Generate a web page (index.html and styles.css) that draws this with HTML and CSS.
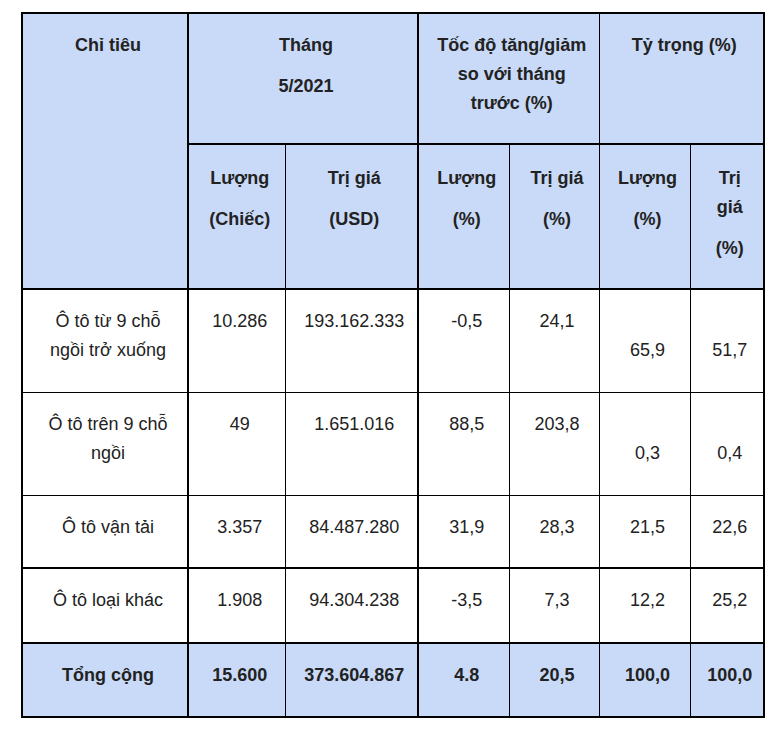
FILE: index.html
```html
<!DOCTYPE html>
<html lang="vi">
<head>
<meta charset="utf-8">
<title>Bảng</title>
<link rel="stylesheet" href="styles.css">
</head>
<body>
<div class="page">
<table class="data">
  <colgroup>
    <col class="c1"><col class="c2"><col class="c3"><col class="c4"><col class="c5"><col class="c6"><col class="c7">
  </colgroup>
  <thead>
    <tr class="h1">
      <th rowspan="2" class="first">Chỉ tiêu</th>
      <th colspan="2"><p>Tháng</p><p>5/2021</p></th>
      <th colspan="2" class="lb">Tốc độ tăng/giảm so với tháng trước (%)</th>
      <th colspan="2">Tỷ trọng (%)</th>
    </tr>
    <tr class="h2">
      <th><p>Lượng</p><p>(Chiếc)</p></th>
      <th><p>Trị giá</p><p>(USD)</p></th>
      <th class="lb"><p>Lượng</p><p>(%)</p></th>
      <th><p>Trị giá</p><p>(%)</p></th>
      <th><p>Lượng</p><p>(%)</p></th>
      <th><p>Trị giá</p><p>(%)</p></th>
    </tr>
  </thead>
  <tbody>
    <tr class="two">
      <td class="first">Ô tô từ 9 chỗ ngồi trở xuống</td>
      <td>10.286</td>
      <td>193.162.333</td>
      <td class="lb">-0,5</td>
      <td>24,1</td>
      <td class="low">65,9</td>
      <td class="low">51,7</td>
    </tr>
    <tr class="two r2">
      <td class="first">Ô tô trên 9 chỗ ngồi</td>
      <td>49</td>
      <td>1.651.016</td>
      <td class="lb">88,5</td>
      <td>203,8</td>
      <td class="low">0,3</td>
      <td class="low">0,4</td>
    </tr>
    <tr class="thick r3">
      <td class="first">Ô tô vận tải</td>
      <td>3.357</td>
      <td>84.487.280</td>
      <td class="lb">31,9</td>
      <td>28,3</td>
      <td>21,5</td>
      <td>22,6</td>
    </tr>
    <tr class="thick">
      <td class="first">Ô tô loại khác</td>
      <td>1.908</td>
      <td>94.304.238</td>
      <td class="lb">-3,5</td>
      <td>7,3</td>
      <td>12,2</td>
      <td>25,2</td>
    </tr>
    <tr class="total">
      <td class="first">Tổng cộng</td>
      <td>15.600</td>
      <td>373.604.867</td>
      <td class="lb">4.8</td>
      <td>20,5</td>
      <td>100,0</td>
      <td>100,0</td>
    </tr>
  </tbody>
</table>
</div>
</body>
</html>
```

FILE: styles.css
```css
html, body {
  margin: 0;
  padding: 0;
  background: #ffffff;
}

.page {
  padding: 12px 0 0 21px;
}

.data {
  border-collapse: collapse;
  table-layout: fixed;
  width: 744px;
  border: 2px solid #000;
  font-family: "Liberation Sans", Arial, sans-serif;
  font-size: 18px;
  line-height: 28.8px;
  color: #222;
}

.c1 { width: 166px; }
.c2 { width: 97px; }
.c3 { width: 133px; }
.c4 { width: 91px; }
.c5 { width: 90px; }
.c6 { width: 91px; }
.c7 { width: 74px; }

.data th,
.data td {
  border: 1px solid #000;
  padding: 17px 9px 27px 15px;
  text-align: center;
  vertical-align: top;
}

.data th {
  background: #c9daf8;
  font-weight: bold;
}

.data .h1 th {
  padding-bottom: 26px;
}

.data .h2 th {
  padding-top: 19px;
  padding-bottom: 25px;
}

.data .two td {
  padding-bottom: 28px;
}

.data .r2 td {
  padding-bottom: 27px;
}

.data .r3 td {
  padding-bottom: 25px;
}

.data p {
  margin: 0 0 12px;
}

.data p:last-child {
  margin-bottom: 0;
}

.data .first {
  border-right: 2px solid #000;
}

.data .lb {
  border-left: 2px solid #000;
}

.data thead th {
  border-bottom: 2px solid #000;
}

.data .thick td {
  border-bottom: 2px solid #000;
}

.data .low {
  vertical-align: bottom;
}

.data .total td {
  background: #c9daf8;
  font-weight: bold;
}
```
